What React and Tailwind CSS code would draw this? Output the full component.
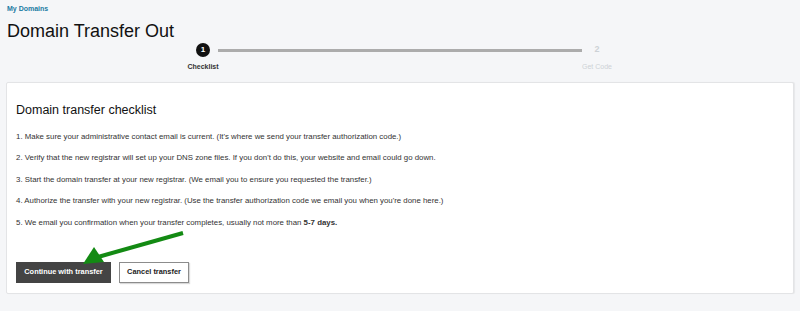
export default function App() {
  const steps = [
    <>Make sure your administrative contact email is current. (It's where we send your transfer authorization code.)</>,
    <>Verify that the new registrar will set up your DNS zone files. If you don't do this, your website and email could go down.</>,
    <>Start the domain transfer at your new registrar. (We email you to ensure you requested the transfer.)</>,
    <>Authorize the transfer with your new registrar. (Use the transfer authorization code we email you when you're done here.)</>,
    <>We email you confirmation when your transfer completes, usually not more than <b className="font-bold">5-7 days.</b></>,
  ];

  return (
    <div className="relative w-[800px] h-[311px] overflow-hidden bg-[#f5f6f8] font-['Liberation_Sans',Arial,sans-serif] text-[#2b2b2b]">
      <div className="px-[7px] pt-[4px]">
        <a className="block text-[7px] leading-[9px] font-bold text-[#1c7ba3]">My Domains</a>
        <h1 className="mt-[9px] text-[18px] leading-[18px] text-[#111]">Domain Transfer Out</h1>
      </div>

      {/* stepper */}
      <div className="mx-auto mt-[3px] flex w-[424px]">
        <div className="flex w-[30px] flex-col items-center">
          <div className="flex h-[14px] w-[14px] items-center justify-center rounded-full bg-[#111] text-[8px] font-bold text-white">
            1
          </div>
          <span className="mt-[5px] whitespace-nowrap text-[7px] font-bold text-[#333]">Checklist</span>
        </div>
        <div className="mt-[5.5px] h-[3px] flex-1 bg-[#acacac]" />
        <div className="flex w-[30px] flex-col items-center">
          <div className="flex h-[14px] items-center justify-center text-[9px] font-bold text-[#cdd2d6]">2</div>
          <span className="mt-[5px] whitespace-nowrap text-[7px] text-[#cdd2d6]">Get Code</span>
        </div>
      </div>

      {/* card */}
      <div className="mx-[6px] mt-[9px] h-[212px] rounded-[2px] border border-[#e3e4e6] bg-white px-[9px] shadow-[1px_0_1px_rgba(0,0,0,0.06)]">
        <h2 className="mt-[20px] text-[12.5px] leading-[14px] text-[#111]">Domain transfer checklist</h2>
        <ol className="mt-[15px] flex flex-col gap-[12.5px] text-[7.85px] leading-[9px] text-[#333]">
          {steps.map((s, i) => (
            <li key={i}>
              {i + 1}. {s}
            </li>
          ))}
        </ol>
        <div className="mt-[35px] flex gap-[8px]">
          <button className="h-[21px] w-[95px] bg-[#444] text-[7.4px] font-bold text-white">
            Continue with transfer
          </button>
          <button className="h-[21px] w-[70px] border border-[#8c8c8c] bg-white text-[7.4px] font-bold text-[#222] shadow-[1px_1px_1px_rgba(0,0,0,0.15)]">
            Cancel transfer
          </button>
        </div>
      </div>

      {/* green annotation arrow */}
      <svg className="pointer-events-none absolute left-0 top-0" width="800" height="311">
        <line x1="183" y1="233" x2="98" y2="257" stroke="#138a13" strokeWidth="4" />
        <polygon points="83,264 94,247 104,262" fill="#138a13" />
      </svg>
    </div>
  );
}
